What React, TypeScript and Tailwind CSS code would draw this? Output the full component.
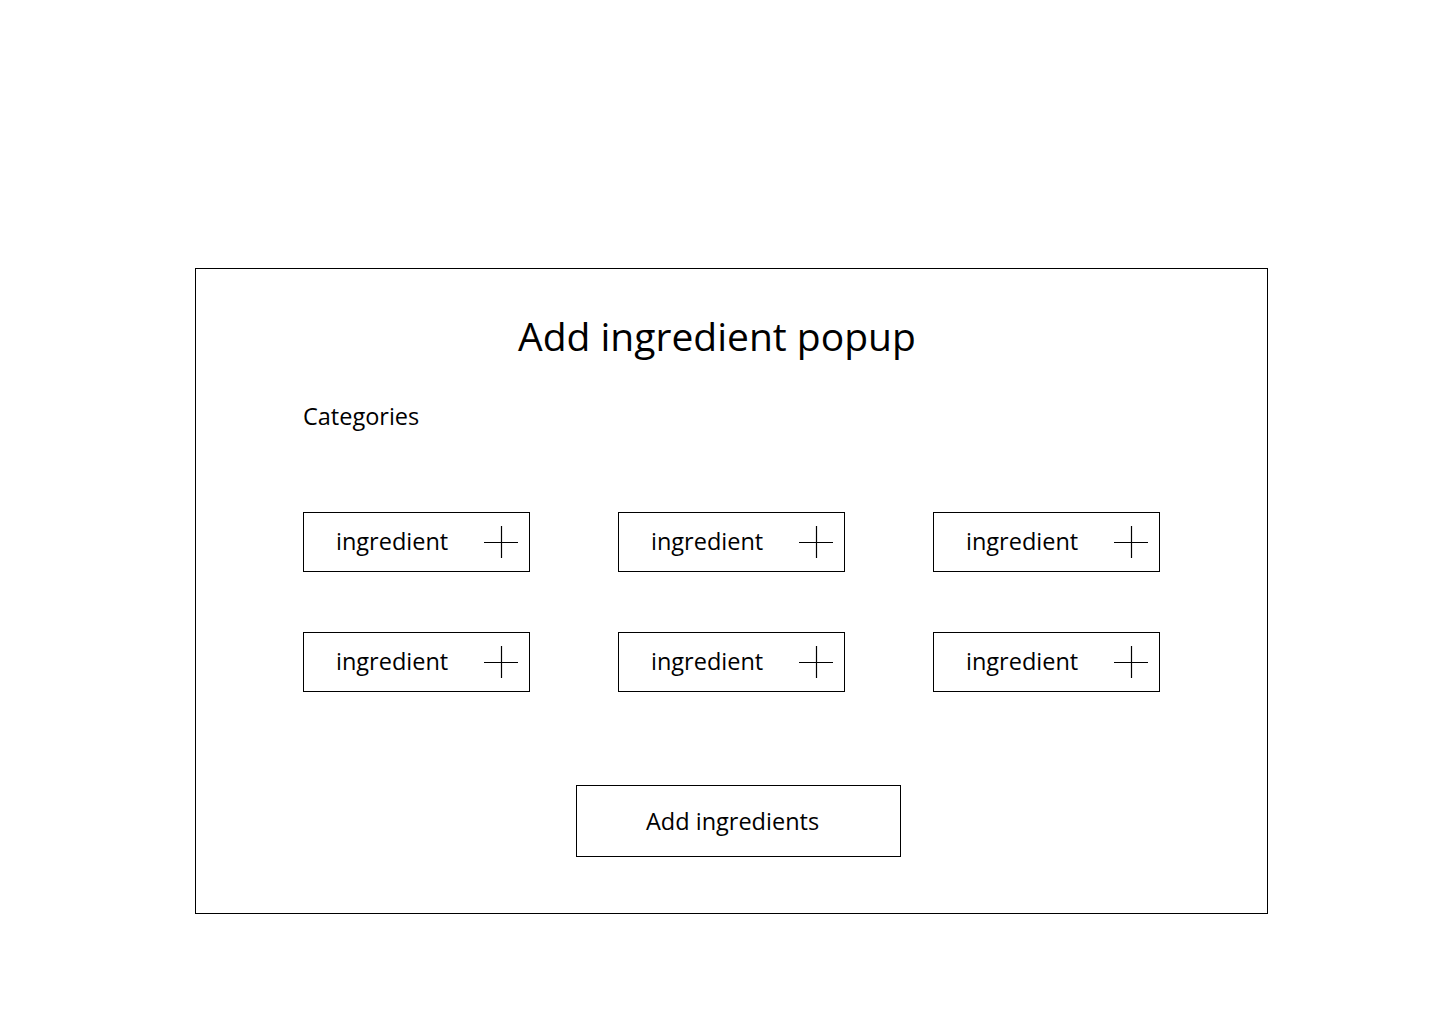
import React from "react";

const items = ["ingredient", "ingredient", "ingredient", "ingredient", "ingredient", "ingredient"];

function PlusIcon() {
  return (
    <svg width="34" height="32" viewBox="0 0 34 32" className="shrink-0">
      <path d="M0 16.5 H34 M17.5 0 V32" stroke="#000" strokeWidth="1.2" fill="none" />
    </svg>
  );
}

export default function App() {
  return (
    <div className="min-h-screen w-full bg-white text-black pt-[268px] pl-[195px]" style={{ fontFamily: '"Open Sans", "Noto Sans", sans-serif' }}>
      <div className="w-[1073px] h-[646px] border border-black flex flex-col">
        <h1 className="mt-[39px] ml-[322px] text-[39px] leading-[56px] font-normal">Add ingredient popup</h1>
        <p className="mt-[36px] ml-[107px] text-[23.5px] leading-[32px]">Categories</p>

        <div className="mt-[80px] ml-[107px] grid grid-cols-[227px_227px_227px] gap-x-[88px] gap-y-[60px]">
          {items.map((name, i) => (
            <div key={i} className="h-[60px] border border-black flex items-center justify-between pl-[32px] pr-[11px]">
              <span className="text-[23.5px] leading-[32px] -mt-[2px]">{name}</span>
              <PlusIcon />
            </div>
          ))}
        </div>

        <button className="mt-[93px] ml-[380px] w-[325px] h-[72px] border border-black flex items-center pl-[69px] text-[23.5px] leading-[32px]">
          Add ingredients
        </button>
      </div>
    </div>
  );
}
